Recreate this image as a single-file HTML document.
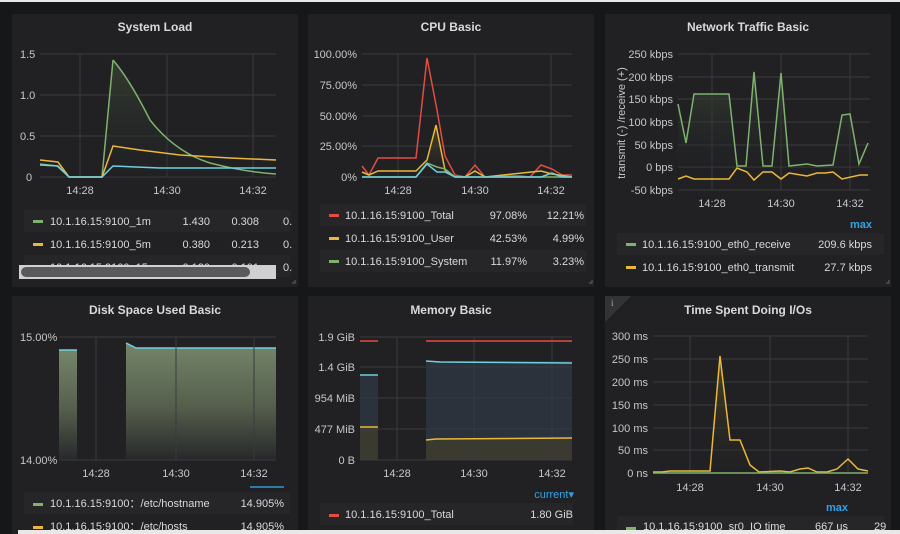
<!DOCTYPE html>
<html><head><meta charset="utf-8"><style>
html,body{margin:0;padding:0;background:#161719;width:900px;height:534px;overflow:hidden}
svg{display:block;font-family:"Liberation Sans",sans-serif}
.t{fill:#d8d9da;font-size:12px;font-weight:bold;text-anchor:middle}
.a{fill:#c7c7c9;font-size:11px}
.r{text-anchor:end}
.m{text-anchor:middle}
.l{fill:#d8d9da;font-size:11px}
.g{stroke:#3a3a3d;stroke-width:1}
.b{fill:#33a2e5;font-size:11px}
</style></head><body>
<svg width="900" height="534" viewBox="0 0 900 534" xmlns="http://www.w3.org/2000/svg">
<defs>
<linearGradient id="dg" x1="0" y1="0" x2="0" y2="1"><stop offset="0" stop-color="#75856a"/><stop offset="0.55" stop-color="#555e4c"/><stop offset="1" stop-color="#26282a"/></linearGradient>
<linearGradient id="gf" x1="0" y1="0" x2="0" y2="1"><stop offset="0" stop-color="#3a4434" stop-opacity=".8"/><stop offset="1" stop-color="#212124" stop-opacity=".2"/></linearGradient>
<linearGradient id="yf" x1="0" y1="0" x2="0" y2="1"><stop offset="0" stop-color="#5a4f28" stop-opacity=".8"/><stop offset="1" stop-color="#212124" stop-opacity=".2"/></linearGradient>
</defs>
<rect x="0" y="0" width="900" height="2" fill="#e8e8e8"/>
<!-- panels -->
<rect x="12" y="14" width="286" height="273" fill="#212124"/>
<rect x="308" y="14" width="286" height="273" fill="#212124"/>
<rect x="605" y="14" width="286" height="273" fill="#212124"/>
<rect x="12" y="296" width="286" height="240" fill="#212124"/>
<rect x="308" y="296" width="286" height="240" fill="#212124"/>
<rect x="605" y="296" width="286" height="240" fill="#212124"/>

<!-- System Load -->
<text class="t" x="155" y="31">System Load</text>
<g class="g"><line x1="40" y1="54" x2="276" y2="54"/><line x1="40" y1="95" x2="276" y2="95"/><line x1="40" y1="136" x2="276" y2="136"/><line x1="40" y1="177" x2="276" y2="177"/><line x1="80" y1="54" x2="80" y2="177"/><line x1="167" y1="54" x2="167" y2="177"/><line x1="253" y1="54" x2="253" y2="177"/></g>
<text class="a" x="20" y="58">1.5</text><text class="a" x="20" y="99">1.0</text><text class="a" x="20" y="140">0.5</text><text class="a" x="26" y="181">0</text>
<text class="a m" x="80" y="194">14:28</text><text class="a m" x="167" y="194">14:30</text><text class="a m" x="253" y="194">14:32</text>
<path d="M102,177 L113,60 Q130,80 150,120 Q175,152 210,163 Q245,172 276,174 L276,177 Z" fill="url(#gf)"/>
<polyline fill="none" stroke="#7eb26d" stroke-width="1.5" points="40,164 57,166 69,177 102,177 113,60"/>
<path d="M113,60 Q130,80 150,120 Q175,152 210,163 Q245,172 276,174" fill="none" stroke="#7eb26d" stroke-width="1.5"/>
<polyline fill="none" stroke="#eab839" stroke-width="1.5" points="40,160 58,162 69,177 102,177 113,146 140,150 180,155 230,158 276,160"/>
<polyline fill="none" stroke="#6ed0e0" stroke-width="1.5" points="40,165 58,166 69,177 102,177 113,166 160,168 276,168"/>
<rect x="24" y="210" width="266" height="22" fill="#262628"/>
<rect x="24" y="255" width="266" height="22" fill="#262628"/>
<rect x="33" y="220" width="10" height="3" fill="#7eb26d"/><text class="l" x="50" y="225">10.1.16.15:9100_1m</text><text class="l r" x="210" y="225">1.430</text><text class="l r" x="259" y="225">0.308</text><text class="l" x="283" y="225">0.</text>
<rect x="33" y="243" width="10" height="3" fill="#eab839"/><text class="l" x="50" y="248">10.1.16.15:9100_5m</text><text class="l r" x="210" y="248">0.380</text><text class="l r" x="259" y="248">0.213</text><text class="l" x="283" y="248">0.</text>
<text class="l" x="50" y="271">10.1.16.15:9100_15m</text><text class="l r" x="210" y="271">0.130</text><text class="l r" x="259" y="271">0.101</text><text class="l" x="283" y="271">0.</text>
<rect x="19" y="265" width="257" height="14" fill="#d0d0d0"/>
<rect x="21" y="267" width="229" height="10" rx="5" fill="#5a5a5c"/>

<!-- CPU -->
<text class="t" x="451" y="31">CPU Basic</text>
<g class="g"><line x1="362" y1="54" x2="572" y2="54"/><line x1="362" y1="85" x2="572" y2="85"/><line x1="362" y1="116" x2="572" y2="116"/><line x1="362" y1="146" x2="572" y2="146"/><line x1="362" y1="177" x2="572" y2="177"/><line x1="398" y1="54" x2="398" y2="177"/><line x1="475" y1="54" x2="475" y2="177"/><line x1="551" y1="54" x2="551" y2="177"/></g>
<text class="a r" x="357" y="58">100.00%</text><text class="a r" x="357" y="89">75.00%</text><text class="a r" x="357" y="120">50.00%</text><text class="a r" x="357" y="150">25.00%</text><text class="a r" x="357" y="181">0%</text>
<text class="a m" x="398" y="194">14:28</text><text class="a m" x="475" y="194">14:30</text><text class="a m" x="551" y="194">14:32</text>
<polygon fill="url(#yf)" points="362,177 362,172 369,175 378,171 416,171 427,160 436,125 445,170 455,177 572,177"/>
<polyline fill="none" stroke="#e24d42" stroke-width="1.5" points="362,166 369,175 378,158 416,158 427,58 437,110 445,156 455,175 465,177 475,165 485,177 500,176 520,176 530,177 541,165 552,169 562,175 572,175"/>
<polyline fill="none" stroke="#eab839" stroke-width="1.5" points="362,172 369,175 378,171 416,171 427,160 436,125 445,170 455,177 465,177 475,171 485,177 541,171 552,174 572,177"/>
<polyline fill="none" stroke="#7eb26d" stroke-width="1.5" points="362,177 416,177 427,163 437,167 445,169 455,177 572,177"/>
<polyline fill="none" stroke="#6ed0e0" stroke-width="1.5" points="362,177 416,177 427,164 437,172 445,172 455,177 541,177 552,173 562,177 572,177"/>
<rect x="320" y="204" width="266" height="22" fill="#262628"/>
<rect x="320" y="250" width="266" height="22" fill="#262628"/>
<rect x="329" y="214" width="10" height="3" fill="#e24d42"/><text class="l" x="345" y="219">10.1.16.15:9100_Total</text><text class="l r" x="527" y="219">97.08%</text><text class="l r" x="584" y="219">12.21%</text>
<rect x="329" y="237" width="10" height="3" fill="#eab839"/><text class="l" x="345" y="242">10.1.16.15:9100_User</text><text class="l r" x="527" y="242">42.53%</text><text class="l r" x="584" y="242">4.99%</text>
<rect x="329" y="260" width="10" height="3" fill="#7eb26d"/><text class="l" x="345" y="265">10.1.16.15:9100_System</text><text class="l r" x="527" y="265">11.97%</text><text class="l r" x="584" y="265">3.23%</text>

<!-- Network -->
<text class="t" x="748" y="31">Network Traffic Basic</text>
<g class="g"><line x1="678" y1="54" x2="870" y2="54"/><line x1="678" y1="77" x2="870" y2="77"/><line x1="678" y1="99" x2="870" y2="99"/><line x1="678" y1="122" x2="870" y2="122"/><line x1="678" y1="145" x2="870" y2="145"/><line x1="678" y1="167" x2="870" y2="167"/><line x1="678" y1="190" x2="870" y2="190"/><line x1="712" y1="54" x2="712" y2="190"/><line x1="781" y1="54" x2="781" y2="190"/><line x1="850" y1="54" x2="850" y2="190"/></g>
<text class="a r" x="673" y="58">250 kbps</text><text class="a r" x="673" y="81">200 kbps</text><text class="a r" x="673" y="103">150 kbps</text><text class="a r" x="673" y="126">100 kbps</text><text class="a r" x="673" y="149">50 kbps</text><text class="a r" x="673" y="171">0 bps</text><text class="a r" x="673" y="194">-50 kbps</text>
<text class="a m" transform="translate(625,123) rotate(-90)">transmit  (-)  /receive  (+)</text>
<text class="a m" x="712" y="207">14:28</text><text class="a m" x="781" y="207">14:30</text><text class="a m" x="850" y="207">14:32</text>
<polygon fill="url(#gf)" points="678,167 678,104 686,143 694,94 729,94 737,166 746,166 754,72 763,166 772,166 781,73 789,166 807,164 817,166 833,165 842,115 850,114 859,164 868,143 868,167"/>
<polyline fill="none" stroke="#7eb26d" stroke-width="1.5" points="678,104 686,143 694,94 729,94 737,166 746,166 754,72 763,166 772,166 781,73 789,166 807,164 817,166 833,165 842,115 850,114 859,164 868,143"/>
<polyline fill="none" stroke="#eab839" stroke-width="1.5" points="678,179 686,176 694,179 729,179 737,168 747,172 754,180 763,172 772,172 781,179 789,173 807,176 817,173 825,173 833,172 842,179 860,175 868,175"/>
<text class="b r" x="872" y="228" font-weight="bold">max</text>
<rect x="617" y="233" width="267" height="22" fill="#262628"/>
<rect x="626" y="243" width="10" height="3" fill="#7eb26d"/><text class="l" x="642" y="248">10.1.16.15:9100_eth0_receive</text><text class="l r" x="872" y="248">209.6 kbps</text>
<rect x="626" y="266" width="10" height="3" fill="#eab839"/><text class="l" x="642" y="271">10.1.16.15:9100_eth0_transmit</text><text class="l r" x="872" y="271">27.7 kbps</text>

<!-- Disk -->
<text class="t" x="155" y="314">Disk Space Used Basic</text>
<rect x="59" y="350" width="18" height="110" fill="url(#dg)"/>
<polygon fill="url(#dg)" points="126,343 136,348 276,348 276,460 126,460"/>
<line x1="59" y1="350" x2="77" y2="350" stroke="#6ed0e0" stroke-width="1.5"/>
<polyline fill="none" stroke="#6ed0e0" stroke-width="1.5" points="126,343 136,348 276,348"/>
<g class="g"><line x1="59" y1="337" x2="276" y2="337"/><line x1="59" y1="460" x2="276" y2="460"/><line x1="96" y1="337" x2="96" y2="460"/><line x1="176" y1="337" x2="176" y2="460"/><line x1="254" y1="337" x2="254" y2="460"/></g>
<text class="a" x="20" y="341">15.00%</text><text class="a" x="20" y="464">14.00%</text>
<text class="a m" x="96" y="477">14:28</text><text class="a m" x="176" y="477">14:30</text><text class="a m" x="254" y="477">14:32</text>
<rect x="250" y="486" width="34" height="2" fill="#33a2e5" opacity=".7"/>
<rect x="24" y="492" width="266" height="22" fill="#262628"/>
<rect x="33" y="503" width="10" height="3" fill="#7eb26d"/><text class="l" x="50" y="507">10.1.16.15:9100：/etc/hostname</text><text class="l r" x="284" y="507">14.905%</text>
<rect x="33" y="526" width="10" height="3" fill="#eab839"/><text class="l" x="50" y="530">10.1.16.15:9100：/etc/hosts</text><text class="l r" x="284" y="530">14.905%</text>

<!-- Memory -->
<text class="t" x="451" y="314">Memory Basic</text>
<rect x="360" y="375" width="18" height="85" fill="#2b323b"/>
<rect x="426" y="361" width="146" height="99" fill="#2b323b"/>
<rect x="360" y="427" width="18" height="33" fill="#3b3a30"/>
<polygon fill="#3b3a30" points="426,440 436,439 572,438 572,460 426,460"/>
<g class="g"><line x1="360" y1="337" x2="572" y2="337"/><line x1="360" y1="367" x2="572" y2="367"/><line x1="360" y1="398" x2="572" y2="398"/><line x1="360" y1="429" x2="572" y2="429"/><line x1="360" y1="460" x2="572" y2="460"/><line x1="397" y1="337" x2="397" y2="460"/><line x1="474" y1="337" x2="474" y2="460"/><line x1="552" y1="337" x2="552" y2="460"/></g>
<line x1="360" y1="341" x2="378" y2="341" stroke="#e24d42" stroke-width="1.5"/><line x1="426" y1="341" x2="572" y2="341" stroke="#e24d42" stroke-width="1.5"/>
<line x1="360" y1="375" x2="378" y2="375" stroke="#6ed0e0" stroke-width="1.5"/><polyline fill="none" stroke="#6ed0e0" stroke-width="1.5" points="426,361 440,362 572,363"/>
<line x1="360" y1="427" x2="378" y2="427" stroke="#eab839" stroke-width="1.5"/><polyline fill="none" stroke="#eab839" stroke-width="1.5" points="426,440 436,439 572,438"/>
<text class="a r" x="355" y="341">1.9 GiB</text><text class="a r" x="355" y="371">1.4 GiB</text><text class="a r" x="355" y="402">954 MiB</text><text class="a r" x="355" y="433">477 MiB</text><text class="a r" x="355" y="464">0 B</text>
<text class="a m" x="397" y="477">14:28</text><text class="a m" x="474" y="477">14:30</text><text class="a m" x="552" y="477">14:32</text>
<text class="b r" x="574" y="498">current▾</text>
<rect x="320" y="503" width="253" height="22" fill="#262628"/>
<rect x="329" y="514" width="10" height="3" fill="#e24d42"/><text class="l" x="345" y="518">10.1.16.15:9100_Total</text><text class="l r" x="573" y="518">1.80 GiB</text>

<!-- IO -->
<polygon points="605,296 631,296 605,322" fill="#333336"/>
<text x="611" y="306" fill="#aaa" font-size="9" font-family="Liberation Serif,serif">i</text>
<text class="t" x="748" y="314">Time Spent Doing I/Os</text>
<g class="g"><line x1="653" y1="336" x2="868" y2="336"/><line x1="653" y1="359" x2="868" y2="359"/><line x1="653" y1="382" x2="868" y2="382"/><line x1="653" y1="405" x2="868" y2="405"/><line x1="653" y1="428" x2="868" y2="428"/><line x1="653" y1="450" x2="868" y2="450"/><line x1="653" y1="473" x2="868" y2="473"/><line x1="690" y1="336" x2="690" y2="473"/><line x1="770" y1="336" x2="770" y2="473"/><line x1="848" y1="336" x2="848" y2="473"/></g>
<text class="a r" x="648" y="340">300 ms</text><text class="a r" x="648" y="363">250 ms</text><text class="a r" x="648" y="386">200 ms</text><text class="a r" x="648" y="409">150 ms</text><text class="a r" x="648" y="432">100 ms</text><text class="a r" x="648" y="454">50 ms</text><text class="a r" x="648" y="477">0 ns</text>
<text class="a m" x="690" y="491">14:28</text><text class="a m" x="770" y="491">14:30</text><text class="a m" x="848" y="491">14:32</text>
<polygon fill="url(#yf)" points="653,473 653,472 662,472 670,471 710,471 720,356 730,440 740,440 750,465 759,472 868,471 868,473"/>
<polyline fill="none" stroke="#eab839" stroke-width="1.5" points="653,472 662,472 670,471 710,471 720,356 730,440 740,440 750,465 759,472 780,471 790,472 800,469 808,468 817,472 827,472 837,469 848,459 858,469 868,471"/>
<line x1="653" y1="473" x2="868" y2="473" stroke="#7eb26d" stroke-width="1.5"/>
<text class="b r" x="848" y="511" font-weight="bold">max</text>
<rect x="617" y="516" width="267" height="20" fill="#262628"/>
<rect x="626" y="527" width="10" height="3" fill="#7eb26d"/><text class="l" x="643" y="530">10.1.16.15:9100_sr0_IO time</text><text class="l r" x="848" y="530">667 us</text><text class="l" x="874" y="530">29</text>

<!-- resize corners -->
<path d="M292,283 L295,283 L295,280" stroke="#666" fill="none"/>
<path d="M589,283 L592,283 L592,280" stroke="#666" fill="none"/>
<path d="M886,283 L889,283 L889,280" stroke="#666" fill="none"/>
<rect x="18" y="530" width="882" height="4" fill="#e8e8e8"/>
</svg>
</body></html>
